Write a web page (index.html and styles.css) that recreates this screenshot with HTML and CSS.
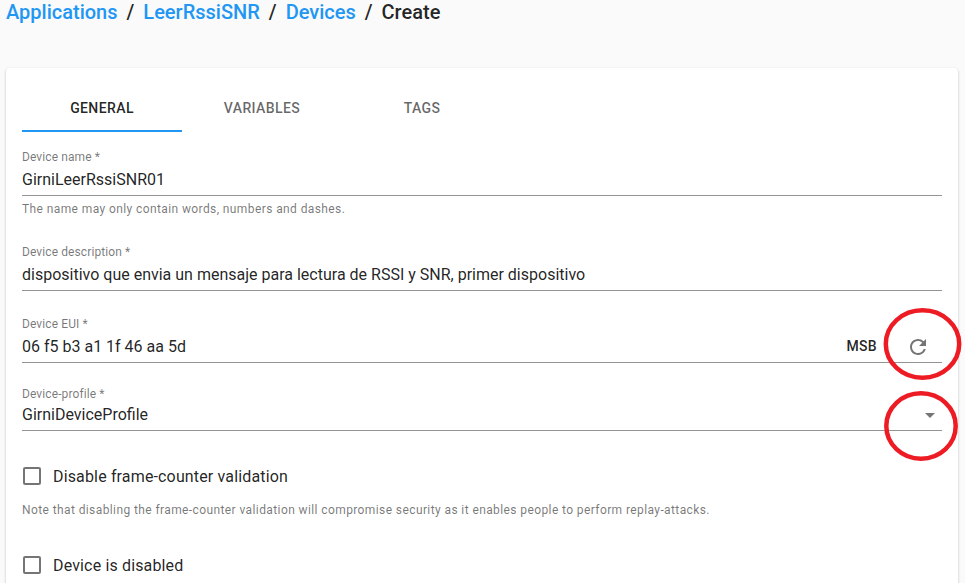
FILE: index.html
```html
<!DOCTYPE html>
<html lang="en">
<head>
<meta charset="utf-8">
<title>Create device</title>
<link rel="stylesheet" href="styles.css">
</head>
<body>
<nav class="crumbs">
  <a class="link">Applications</a><span class="sep">/</span>
  <a class="link">LeerRssiSNR</a><span class="sep">/</span>
  <a class="link">Devices</a><span class="sep">/</span>
  <span class="current">Create</span>
</nav>
<main class="card">
  <div class="tabs">
    <div class="tab active">General</div>
    <div class="tab">Variables</div>
    <div class="tab">Tags</div>
  </div>
  <div class="field name">
    <label class="label">Device name *</label>
    <div class="control"><span class="value">GirniLeerRssiSNR01</span></div>
    <p class="help">The name may only contain words, numbers and dashes.</p>
  </div>
  <div class="field desc">
    <label class="label">Device description *</label>
    <div class="control"><span class="value">dispositivo que envia un mensaje para lectura de RSSI y SNR, primer dispositivo</span></div>
  </div>
  <div class="field eui">
    <label class="label">Device EUI *</label>
    <div class="control">
      <span class="value">06 f5 b3 a1 1f 46 aa 5d</span>
      <span class="msb">MSB</span>
      <svg class="refresh" viewBox="0 0 24 24" width="24" height="24"><path d="M17.65 6.35A7.958 7.958 0 0 0 12 4c-4.42 0-7.99 3.58-7.99 8s3.57 8 7.99 8c3.73 0 6.84-2.55 7.73-6h-2.08A5.99 5.99 0 0 1 12 18c-3.31 0-6-2.69-6-6s2.69-6 6-6c1.66 0 3.14.69 4.22 1.78L13 11h7V4l-2.35 2.35z"/></svg>
    </div>
  </div>
  <div class="field profile">
    <label class="label">Device-profile *</label>
    <div class="control select">
      <span class="value">GirniDeviceProfile</span>
      <span class="caret"></span>
    </div>
  </div>
  <label class="check first"><span class="box"></span><span>Disable frame-counter validation</span></label>
  <p class="help note">Note that disabling the frame-counter validation will compromise security as it enables people to perform replay-attacks.</p>
  <label class="check"><span class="box"></span><span>Device is disabled</span></label>
</main>
<svg class="marks" width="965" height="583" viewBox="0 0 965 583">
  <ellipse cx="922.500" cy="344" rx="36.700" ry="33.700"/>
  <ellipse cx="921" cy="426" rx="34.700" ry="32.700"/>
</svg>
</body>
</html>
```
FILE: styles.css
```css
* { box-sizing: border-box; }
html, body { margin: 0; height: 583px; overflow: hidden; }
body {
  background: #fafafa;
  font-family: Roboto, "Liberation Sans", sans-serif;
  color: rgba(0, 0, 0, 0.87);
  position: relative;
}
.crumbs {
  height: 68px;
  padding: 0 0 0 6px;
  font-size: 20px;
  font-weight: 500;
  line-height: 24px;
  display: flex;
  align-items: flex-start;
}
.link { color: #2196f3; }
.sep { margin: 0 9px; }
.current { color: rgba(0, 0, 0, 0.87); }
.card {
  margin: 0 7px 0 6px;
  height: 540px;
  padding: 16px;
  background: #fff;
  border-radius: 4px;
  box-shadow: 0 1px 3px rgba(0,0,0,.2), 0 1px 1px rgba(0,0,0,.14), 0 2px 1px -1px rgba(0,0,0,.12);
}
.tabs { display: flex; height: 48px; }
.tab {
  width: 160px;
  display: flex;
  align-items: center;
  justify-content: center;
  font-size: 14px;
  font-weight: 500;
  letter-spacing: 0.4px;
  text-transform: uppercase;
  color: rgba(0, 0, 0, 0.6);
}
.tab.active {
  color: rgba(0, 0, 0, 0.87);
  box-shadow: inset 0 -2px 0 #2196f3;
}
.field { display: flex; flex-direction: column; }
.name { margin-top: 18px; }
.desc { margin-top: 29px; }
.eui { margin-top: 26px; }
.profile { margin-top: 24px; }
.label {
  font-size: 12px;
  line-height: 14px;
  letter-spacing: 0.1px;
  color: rgba(0, 0, 0, 0.54);
}
.control {
  height: 32px;
  display: flex;
  align-items: flex-end;
  padding-bottom: 6px;
  border-bottom: 1px solid rgba(0, 0, 0, 0.42);
  font-size: 16px;
  position: relative;
}
.control.select { height: 30px; }
.value { flex: 1; line-height: 19px; }
.msb {
  font-size: 14px;
  font-weight: 500;
  line-height: 19px;
  letter-spacing: 0.3px;
  margin-right: 65px;
}
.refresh {
  fill: rgba(0, 0, 0, 0.54);
  position: absolute;
  right: 12px;
  bottom: 3px;
}
.caret {
  width: 0;
  height: 0;
  margin: 0 7px 6px 0;
  border-left: 5px solid transparent;
  border-right: 5px solid transparent;
  border-top: 5px solid rgba(0, 0, 0, 0.54);
}
.help {
  margin: 6px 0 0;
  font-size: 12px;
  line-height: 14px;
  letter-spacing: 0.4px;
  color: rgba(0, 0, 0, 0.54);
}
.check {
  display: flex;
  align-items: center;
  gap: 12px;
  height: 24px;
  font-size: 16px;
  letter-spacing: 0.15px;
}
.check.first { margin-top: 33px; }
.box {
  width: 18px;
  height: 18px;
  margin-left: 1px;
  border: 2px solid rgba(0, 0, 0, 0.54);
  border-radius: 2px;
}
.note { margin: 15px 0 36px; }
.marks { position: absolute; left: 0; top: 0; pointer-events: none; }
.marks ellipse { fill: none; stroke: #ed1c24; stroke-width: 4.500; }
```
